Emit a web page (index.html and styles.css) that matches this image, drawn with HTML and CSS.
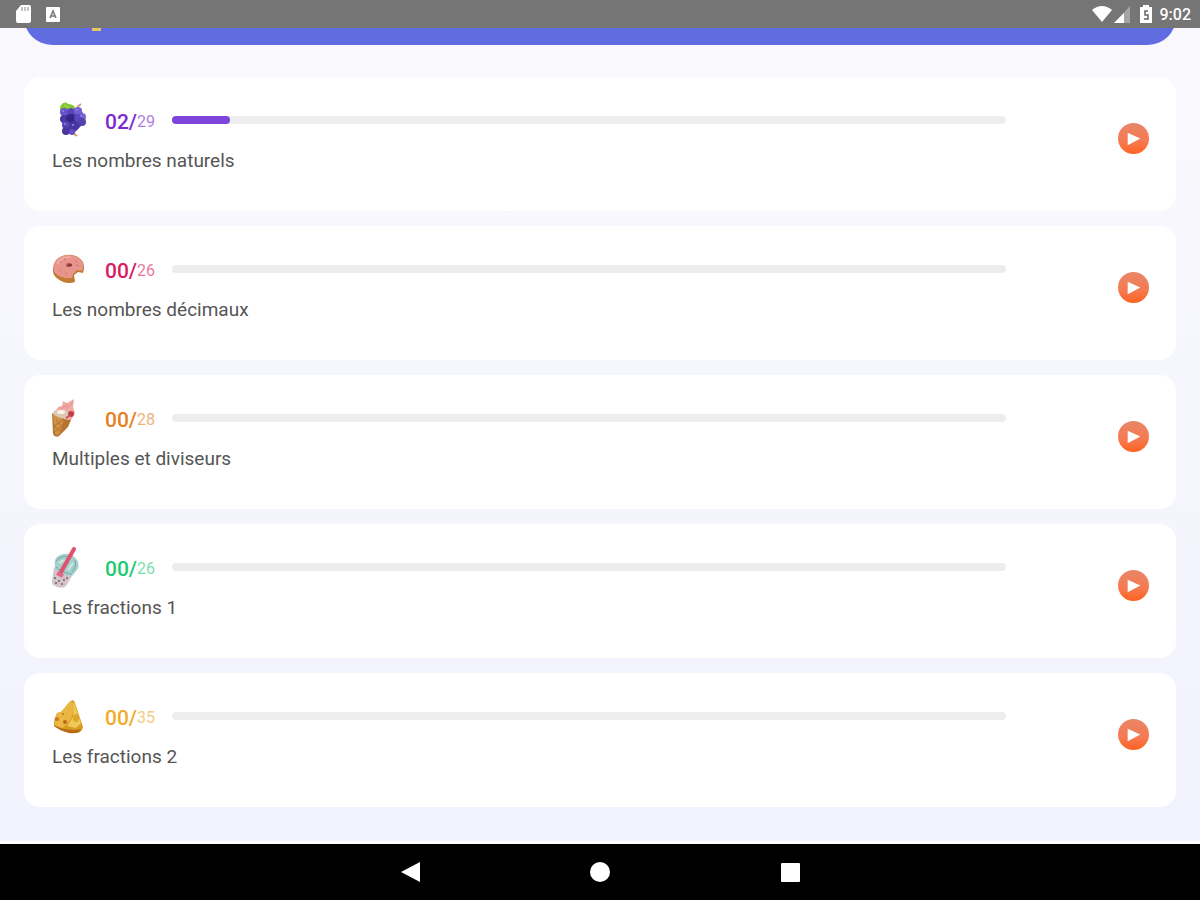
FILE: index.html
```html
<!DOCTYPE html>
<html lang="fr">
<head>
    <meta charset="UTF-8">
    <meta name="viewport" content="width=device-width, initial-scale=1.0">
    <title>Mathématiques</title>
    <link rel="stylesheet" href="styles.css">
</head>
<body>
    <header class="status-bar">
      <svg class="status-icon" viewBox="0 0 20 20">
        <path fill="#fff" d="M8 1h8q2 0 2 2v14q0 2-2 2H5q-2 0-2-2V7z"/>
        <path fill="#c4c4c4" d="M8 3h2v4H8zM11 3h2v4h-2zM14 3h2v4h-2z"/>
      </svg>
      <svg class="status-icon" viewBox="0 0 20 20">
        <rect x="3" y="3" width="14" height="15" rx="1" fill="#fff"/>
        <path d="M7 14l3-7 3 7M8 12h4" fill="none" stroke="#777" stroke-width="1.5"/>
      </svg>
      <div class="status-right">
        <svg class="status-icon" viewBox="0 0 20 20">
          <path fill="#fff" d="M0 6Q10-2 20 6L10 18z"/>
        </svg>
        <svg class="status-icon" viewBox="0 0 20 20">
          <path fill="#a5a5a5" d="M18 2v17H2z"/>
          <path fill="#fff" d="M12 9v10H2z"/>
        </svg>
        <svg class="status-icon battery" viewBox="0 0 20 20">
          <path fill="#fff" d="M7 1h6v2h3v16H4V3h3z"/>
          <path d="M12 7H9v4h3v4H8" fill="none" stroke="#666" stroke-width="1.5"/>
        </svg>
        <span class="clock">9:02</span>
      </div>
    </header>

    <main class="content">
      <div class="banner"><span class="banner-mark"></span></div>

      <!-- Liste des chapitres -->
      <section class="chapters">
        <article class="card grape">
          <div class="card-body">
            <div class="card-top">
              <svg class="food" viewBox="0 0 40 42">
                <path d="M25 8l4-3M21 34l4 3" stroke="#d99a78" stroke-width="2"/>
                <path d="M12 10h17l4 9-3 7-8 8-8 1-3-7-1-12z" fill="#4b389f"/>
                <path d="M8 8Q12 1 16 5q7 0 8 6l-8 1-8-1z" fill="#83c832"/>
                <path d="M12 6l9 5" stroke="#a5df50"/>
                <circle cx="12" cy="13" r="4" fill="#6754cb"/>
                <circle cx="19" cy="13" r="4" fill="#5945bb"/>
                <circle cx="26" cy="12" r="4" fill="#7360d4"/>
                <circle cx="30" cy="18" r="4" fill="#7765d8"/>
                <circle cx="12" cy="20" r="4" fill="#4936a5"/>
                <circle cx="19" cy="20" r="5" fill="#342684"/>
                <circle cx="26" cy="19" r="4" fill="#5b46bb"/>
                <circle cx="30" cy="23" r="4" fill="#5441ab"/>
                <circle cx="14" cy="26" r="4" fill="#5944b6"/>
                <circle cx="22" cy="27" r="5" fill="#4835a1"/>
                <circle cx="14" cy="32" r="4" fill="#4b369f"/>
                <circle cx="20" cy="33" r="3" fill="#6551c2"/>
                <g fill="#9182e8"><circle cx="11" cy="12" r="1"/><circle cx="25" cy="11" r="1"/><circle cx="29" cy="17" r="1"/><circle cx="13" cy="25" r="1"/><circle cx="21" cy="26" r="1"/></g>
              </svg>
              <p class="count"><b>02/</b><span>29</span></p>
              <div class="bar" role="progressbar" aria-label="Les nombres naturels" aria-valuenow="2" aria-valuemax="29"><div class="fill" style="width: 6.9%"></div></div>
            </div>
            <h2 class="card-title">Les nombres naturels</h2>
          </div>
          <button class="play" aria-label="Commencer"><svg viewBox="0 0 32 32"><path d="M10 10l13 6-13 7z"/></svg></button>
        </article>

        <article class="card donut">
          <div class="card-body">
            <div class="card-top">
              <svg class="food" viewBox="0 0 40 42">
                <path d="M1 20Q2 10 13 7q12-2 18 7 2 5 0 11l-5-1-4 3 1 7Q14 37 6 31 0 27 1 20z" fill="#c27b32"/>
                <path d="M1 19Q3 9 14 7q12-1 17 8 1 4-1 8l-5-1-4 4-1 4Q10 31 4 26q-3-3-3-7z" fill="#e8958b"/>
                <path d="M5 16q5-8 14-7" fill="none" stroke="#f2aaa0" stroke-width="2"/>
                <ellipse cx="17" cy="17" rx="3" ry="2" fill="#b94c4f"/>
                <ellipse cx="18" cy="17" rx="2" ry="1" fill="#7f3435"/>
                <path d="M8 15l2-2M7 22l2 1M23 12l2 2M13 26l2-1M24 17l3 1M12 11l2 1" stroke="#c8796d"/>
              </svg>
              <p class="count"><b>00/</b><span>26</span></p>
              <div class="bar" role="progressbar" aria-label="Les nombres décimaux" aria-valuenow="0" aria-valuemax="26"></div>
            </div>
            <h2 class="card-title">Les nombres décimaux</h2>
          </div>
          <button class="play" aria-label="Commencer"><svg viewBox="0 0 32 32"><path d="M10 10l13 6-13 7z"/></svg></button>
        </article>

        <article class="card cone">
          <div class="card-body">
            <div class="card-top">
              <svg class="food" viewBox="0 0 40 42">
                <path d="M3 15Q6 8 10 9l1-5 4 2 7-4-1 8 2 6-4 7-13-1z" fill="#efaaa4"/>
                <path d="M9 12l7-5M14 12l7-7" stroke="#e08a86"/>
                <path d="M0 16Q7 22 19 23l-3 7-9 9q-4 2-6-2z" fill="#b67630"/>
                <path d="M1 17l2 20q2 2 5-1l4-15z" fill="#cf9346"/>
                <path d="M4 23l8 9M2 29l7 6M16 24L3 35M12 22L2 29" stroke="#b26f2c"/>
                <ellipse cx="10" cy="17" rx="9" ry="4" fill="#d9c9b5" transform="rotate(12 10 17)"/>
                <ellipse cx="9" cy="15" rx="4" ry="2" fill="#fff1e6"/>
                <circle cx="19" cy="17" r="3" fill="#c43f45"/>
                <path d="M14 21l3-2" stroke="#d84e55" stroke-width="2"/>
              </svg>
              <p class="count"><b>00/</b><span>28</span></p>
              <div class="bar" role="progressbar" aria-label="Multiples et diviseurs" aria-valuenow="0" aria-valuemax="28"></div>
            </div>
            <h2 class="card-title">Multiples et diviseurs</h2>
          </div>
          <button class="play" aria-label="Commencer"><svg viewBox="0 0 32 32"><path d="M10 10l13 6-13 7z"/></svg></button>
        </article>

        <article class="card tea">
          <div class="card-body">
            <div class="card-top">
              <svg class="food" viewBox="0 0 40 42">
                <path d="M2 21l18 9-6 10q-3 3-9 1-6-2-5-6z" fill="#d4c5cc"/>
                <path d="M3 20Q1 12 8 9q11-4 17 5 3 5 0 10l-5 6q-10 0-17-7z" fill="#a5cfca"/>
                <path d="M4 15q6-6 12-4M23 14q2 6-3 12M4 21q8 7 16 7" fill="none" stroke="#79aaa7"/>
                <path d="M7 17l5-3M16 24l5-7" stroke="#cce9e5" stroke-width="2"/>
                <path d="M9 26L22 3" stroke="#e0506f" stroke-width="4" stroke-linecap="round"/>
                <path d="M5 27l6 3" stroke="#e6668b" stroke-width="4"/>
                <g fill="#765b67"><circle cx="3" cy="32" r="1"/><circle cx="7" cy="35" r="1"/><circle cx="12" cy="34" r="1"/><circle cx="4" cy="37" r="1"/><circle cx="10" cy="38" r="1"/><circle cx="15" cy="32" r="1"/></g>
              </svg>
              <p class="count"><b>00/</b><span>26</span></p>
              <div class="bar" role="progressbar" aria-label="Les fractions 1" aria-valuenow="0" aria-valuemax="26"></div>
            </div>
            <h2 class="card-title">Les fractions 1</h2>
          </div>
          <button class="play" aria-label="Commencer"><svg viewBox="0 0 32 32"><path d="M10 10l13 6-13 7z"/></svg></button>
        </article>

        <article class="card cheese">
          <div class="card-body">
            <div class="card-top">
              <svg class="food" viewBox="0 0 40 42">
                <path d="M2 26l3-8 4-1 10-11q3-2 4 2l8 24q-1 6-8 6-12-1-21-8z" fill="#d99a21"/>
                <path d="M2 25l3-7 4-1 9-11 5 3-4 15-9 10-7-4z" fill="#e8b843"/>
                <path d="M22 7l7 21-5 5-9-2 6-9z" fill="#f0c856"/>
                <path d="M2 30q13 7 27 4l-2 3q-4 2-10 1Q8 36 2 31z" fill="#b96a16"/>
                <circle cx="11" cy="19" r="1" fill="#b96d1f"/>
                <circle cx="5" cy="24" r="2" fill="#c7772b"/>
                <circle cx="13" cy="27" r="2" fill="#bd6718"/>
                <ellipse cx="24" cy="23" rx="3" ry="4" fill="#dfa52a"/>
              </svg>
              <p class="count"><b>00/</b><span>35</span></p>
              <div class="bar" role="progressbar" aria-label="Les fractions 2" aria-valuenow="0" aria-valuemax="35"></div>
            </div>
            <h2 class="card-title">Les fractions 2</h2>
          </div>
          <button class="play" aria-label="Commencer"><svg viewBox="0 0 32 32"><path d="M10 10l13 6-13 7z"/></svg></button>
        </article>
      </section>
    </main>

    <nav class="nav-bar">
      <button aria-label="Retour"><svg viewBox="0 0 20 20"><path d="M20 0v20L1 10z"/></svg></button>
      <button aria-label="Accueil"><svg viewBox="0 0 20 20"><circle cx="10" cy="10" r="10"/></svg></button>
      <button aria-label="Applications"><svg viewBox="0 0 20 20"><rect x="1" y="1" width="19" height="19" rx="1"/></svg></button>
    </nav>
</body>
</html>
```
FILE: styles.css
```css
* {
  box-sizing: border-box;
}

body {
  display: flex;
  flex-direction: column;
  height: 100vh;
  margin: 0;
  font-family: Roboto, "Liberation Sans", sans-serif;
  background-color: #000;
}

/* ------BARRE D'ETAT------- */
.status-bar {
  display: flex;
  flex: none;
  align-items: center;
  gap: 10px;
  height: 28px;
  padding: 0 9px 0 13px;
  background-color: #757575;
  color: #fff;
}

.status-icon {
  display: block;
  width: 20px;
  height: 20px;
}

.status-right {
  display: flex;
  align-items: center;
  margin-left: auto;
}

.battery {
  margin: 0 4px;
}

.clock {
  padding-top: 2px;
  font-size: 16px;
  font-weight: 500;
  line-height: 26px;
}

/* ------CONTENU------- */
.content {
  flex: 1;
  min-height: 0;
  overflow: hidden;
  padding: 0 24px;
  background: linear-gradient(#f9f9fd, #f2f2fe);
  border-bottom: 3px solid #fff;
}

/* la banniere est deja presque sortie de l'ecran */
.banner {
  height: 80px;
  margin-top: -63px;
  padding: 63px 68px 0;
  border-radius: 28px;
  background-color: #616ce0;
}

.banner-mark {
  display: block;
  width: 9px;
  height: 3px;
  background-color: #e3c65c;
}

.chapters {
  display: flex;
  flex-direction: column;
  gap: 15px;
  margin-top: 32px;
}

/* ------CARTES------- */
.card {
  display: flex;
  align-items: center;
  gap: 112px;
  padding: 21px 27px 33px 28px;
  border-radius: 16px;
  background-color: #fff;
}

.card-body {
  flex: 1;
}

.card-top {
  display: flex;
  align-items: center;
  height: 44px;
}

.food {
  flex: none;
  width: 40px;
  height: 42px;
  margin-right: 13px;
}

.count {
  display: flex;
  align-items: center;
  flex: none;
  width: 67px;
  margin: 0;
  padding-top: 4px;
  font-size: 16px;
  line-height: 24px;
}

.count b {
  font-size: 21px;
  font-weight: 500;
}

.count span {
  opacity: 0.6;
}

.grape .count { color: #7b28d0; }
.donut .count { color: #d81b60; }
.cone .count { color: #e8801e; }
.tea .count { color: #21cb72; }
.cheese .count { color: #f0ab2a; }

.bar {
  flex: 1;
  height: 8px;
  border-radius: 4px;
  background-color: #ededed;
}

.fill {
  height: 8px;
  border-radius: 4px;
  background-color: #7e45db;
}

.card-title {
  margin: 0;
  padding-top: 2px;
  color: #555;
  font-size: 19px;
  font-weight: 400;
  line-height: 34px;
}

.play {
  flex: none;
  width: 31px;
  height: 31px;
  padding: 0;
  border: none;
  border-radius: 50%;
  background: linear-gradient(#e98668, #f57a50 60%, #ff6220);
  cursor: pointer;
}

.play svg {
  display: block;
  fill: #fff;
}

/* ------NAVIGATION------- */
.nav-bar {
  display: flex;
  flex: none;
  justify-content: center;
  align-items: center;
  gap: 170px;
  height: 56px;
  background-color: #000;
}

.nav-bar button {
  width: 20px;
  height: 20px;
  padding: 0;
  border: none;
  background: none;
  cursor: pointer;
}

.nav-bar svg {
  display: block;
  fill: #fff;
}
```
